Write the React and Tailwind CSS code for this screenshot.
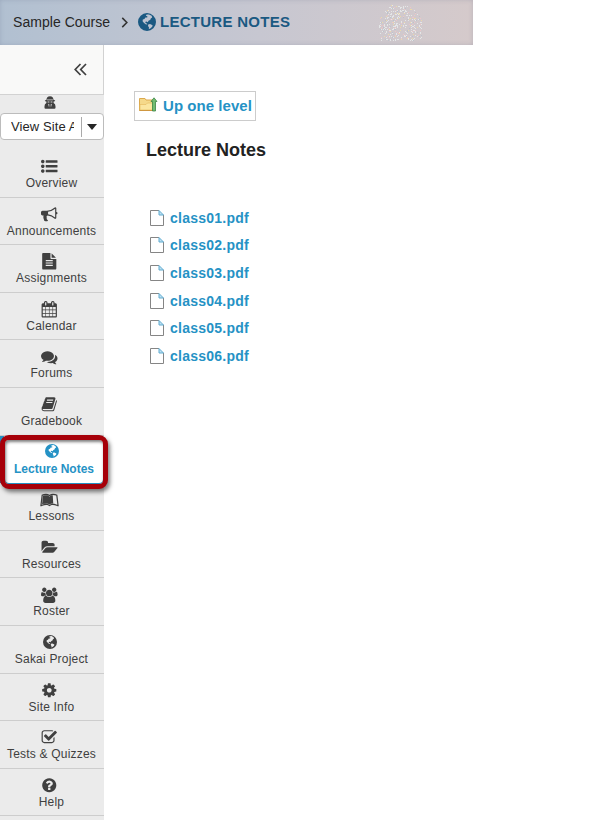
import { FaLeanpub } from "react-icons/fa";

const paths = {
  list: [1792, "M384 1408q0 80-56 136t-136 56-136-56-56-136 56-136 136-56 136 56 56 136zm0-512q0 80-56 136t-136 56-136-56-56-136 56-136 136-56 136 56 56 136zm1408 416v192q0 13-9.5 22.5t-22.5 9.5h-1216q-13 0-22.5-9.5t-9.5-22.5v-192q0-13 9.5-22.5t22.5-9.5h1216q13 0 22.5 9.5t9.5 22.5zm-1408-928q0 80-56 136t-136 56-136-56-56-136 56-136 136-56 136 56 56 136zm1408 416v192q0 13-9.5 22.5t-22.5 9.5h-1216q-13 0-22.5-9.5t-9.5-22.5v-192q0-13 9.5-22.5t22.5-9.5h1216q13 0 22.5 9.5t9.5 22.5zm0-512v192q0 13-9.5 22.5t-22.5 9.5h-1216q-13 0-22.5-9.5t-9.5-22.5v-192q0-13 9.5-22.5t22.5-9.5h1216q13 0 22.5 9.5t9.5 22.5z"],
  bullhorn: [1792, "M1664 640q53 0 90.5 37.5t37.5 90.5-37.5 90.5-90.5 37.5v384q0 52-38 90t-90 38q-417-347-812-380-58 19-91 66t-31 100.5 40 92.5q-20 33-23 65.5t6 58 33.5 55 48 50 61.5 50.5q-29 58-111.5 83t-168.5 11.5-132-55.5q-7-23-29.5-87.5t-32-94.5-23-89-15-101 3.5-98.5 22-110.5h-122q-66 0-113-47t-47-113v-192q0-66 47-113t113-47h480q435 0 896-384 52 0 90 38t38 90v384zm-128 604v-954q-394 302-768 343v270q377 42 768 341z"],
  file: [1792, "M1596 476q14 14 28 36h-472v-472q22 14 36 28zm-476 164h544v1056q0 40-28 68t-68 28h-1344q-40 0-68-28t-28-68v-1600q0-40 28-68t68-28h800v544q0 40 28 68t68 28zm160 736v-64q0-14-9-23t-23-9h-704q-14 0-23 9t-9 23v64q0 14 9 23t23 9h704q14 0 23-9t9-23zm0-256v-64q0-14-9-23t-23-9h-704q-14 0-23 9t-9 23v64q0 14 9 23t23 9h704q14 0 23-9t9-23zm0-256v-64q0-14-9-23t-23-9h-704q-14 0-23 9t-9 23v64q0 14 9 23t23 9h704q14 0 23-9t9-23z"],
  calendar: [1792, "M192 1664h288v-288h-288v288zm352 0h320v-288h-320v288zm-352-352h288v-320h-288v320zm352 0h320v-320h-320v320zm-352-384h288v-288h-288v288zm736 736h320v-288h-320v288zm-384-736h320v-288h-320v288zm768 736h288v-288h-288v288zm-384-352h320v-320h-320v320zm-352-864v-288q0-13-9.5-22.5t-22.5-9.5h-64q-13 0-22.5 9.5t-9.5 22.5v288q0 13 9.5 22.5t22.5 9.5h64q13 0 22.5-9.5t9.5-22.5zm736 864h288v-320h-288v320zm-384-384h320v-288h-320v288zm384 0h288v-288h-288v288zm32-480v-288q0-13-9.5-22.5t-22.5-9.5h-64q-13 0-22.5 9.5t-9.5 22.5v288q0 13 9.5 22.5t22.5 9.5h64q13 0 22.5-9.5t9.5-22.5zm384-64v1280q0 52-38 90t-90 38h-1408q-52 0-90-38t-38-90v-1280q0-52 38-90t90-38h128v-96q0-66 47-113t113-47h64q66 0 113 47t47 113v96h384v-96q0-66 47-113t113-47h64q66 0 113 47t47 113v96h128q52 0 90 38t38 90z"],
  comments: [1792, "M1408 768q0 139-94 257t-256.5 186.5-353.5 68.5q-86 0-176-16-124 88-278 128-36 9-86 16h-3q-11 0-20.5-8t-11.5-21q-1-3-1-6.5t.5-6.5 2-6l2.5-5 3.5-5.5 4-5 4.5-5 4-4.5q5-6 23-25t26-29.5 22.5-29 25-38.5 20.5-44q-124-72-195-177t-71-224q0-139 94-257t256.5-186.5 353.5-68.5 353.5 68.5 256.5 186.5 94 257zm384 256q0 120-71 224.5t-195 176.5q10 24 20.5 44t25 38.5 22.5 29 26 29.5 23 25q1 1 4 4.5t4.5 5 4 5 3.5 5.5l2.5 5 2 6 .5 6.5-1 6.5q-3 14-13 22t-22 7q-50-7-86-16-154-40-278-128-90 16-176 16-271 0-472-132 58 4 88 4 161 0 309-45t264-129q125-92 192-212t67-254q0-77-23-152 129 71 204 178t75 230z"],
  book: [1792, "M1703 478q40 57 18 129l-275 906q-19 64-76.5 107.5t-122.5 43.5h-923q-77 0-148.5-53.5t-99.5-131.5q-24-67-2-127 0-4 3-27t4-37q1-8-3-21.5t-3-19.5q2-11 8-21t16.5-23.5 16.5-23.5q23-38 45-91.5t30-91.5q3-10 .5-30t-.5-28q3-11 17-28t17-23q21-36 42-92t25-90q1-9-2.5-32t.5-28q4-13 22-30.5t22-22.5q19-26 42.5-84.5t27.5-96.5q1-8-3-25.5t-2-26.5q2-8 9-18t18-23 17-21q8-12 16.5-30.5t15-35 16-36 19.5-32 26.5-23.5 36-11.5 47.5 5.5l-1 3q38-9 51-9h761q74 0 114 56t18 130l-274 906q-36 119-71.5 153.5t-128.5 34.5h-869q-27 0-38 15-11 16-1 43 24 70 144 70h923q29 0 56-15.5t35-41.5l300-987q7-22 5-57 38 15 59 43zm-1064 2q-4 13 2 22.5t20 9.5h608q13 0 25.5-9.5t16.5-22.5l21-64q4-13-2-22.5t-20-9.5h-608q-13 0-25.5 9.5t-16.5 22.5zm-83 256q-4 13 2 22.5t20 9.5h608q13 0 25.5-9.5t16.5-22.5l21-64q4-13-2-22.5t-20-9.5h-608q-13 0-25.5 9.5t-16.5 22.5z"],
  folder: [1943, "M1943 952q0 31-31 66l-336 396q-43 51-120.5 86.5t-143.5 35.5h-1088q-34 0-60.5-13t-26.5-43q0-31 31-66l336-396q43-51 120.5-86.5t143.5-35.5h1088q34 0 60.5 13t26.5 43zm-343-344v160h-832q-94 0-197 47.5t-164 119.5l-337 396-5 6q0-4-.5-12.5t-.5-12.5v-960q0-92 66-158t158-66h320q92 0 158 66t66 158v32h544q92 0 158 66t66 158z"],
  users: [1920, "M593 896q-162 5-265 128h-134q-82 0-138-40.5t-56-118.5q0-353 124-353 6 0 43.5 21t97.5 42.5 119 21.5q67 0 133-23-5 37-5 66 0 159 93 287zm1071 637q0 120-73 189.5t-194 69.5h-874q-121 0-194-69.5t-73-189.5q0-53 3.5-103.5t14-109 26.5-108.5 43-97.5 62-81 85.5-53.5 111.5-20q10 0 43 21.5t73 48 107 48 135 21.5 135-21.5 107-48 73-48 43-21.5q61 0 111.5 20t85.5 53.5 62 81 43 97.5 26.5 108.5 14 109 3.5 103.5zm-1024-1277q0 106-75 181t-181 75-181-75-75-181 75-181 181-75 181 75 75 181zm704 384q0 159-112.5 271.5t-271.5 112.5-271.5-112.5-112.5-271.5 112.5-271.5 271.5-112.5 271.5 112.5 112.5 271.5zm576 225q0 78-56 118.5t-138 40.5h-134q-103-123-265-128 93-128 93-287 0-29-5-66 66 23 133 23 59 0 119-21.5t97.5-42.5 43.5-21q124 0 124 353zm-128-609q0 106-75 181t-181 75-181-75-75-181 75-181 181-75 181 75 75 181z"],
  cog: [1792, "M1152 896q0-106-75-181t-181-75-181 75-75 181 75 181 181 75 181-75 75-181zm512-109v222q0 12-8 23t-20 13l-185 28q-19 54-39 91 35 50 107 138 10 12 10 25t-9 23q-27 37-99 108t-94 71q-12 0-26-9l-138-108q-44 23-91 38-16 136-29 186-7 28-36 28h-222q-14 0-24.5-8.5t-11.5-21.5l-28-184q-49-16-90-37l-141 107q-10 9-25 9-14 0-25-11-126-114-165-168-7-10-7-23 0-12 8-23 15-21 51-66.5t54-70.5q-27-50-41-99l-183-27q-13-2-21-12.5t-8-23.5v-222q0-12 8-23t19-13l186-28q14-46 39-92-40-57-107-138-10-12-10-24 0-10 9-23 26-36 98.5-107.5t94.5-71.5q13 0 26 10l138 107q44-23 91-38 16-136 29-186 7-28 36-28h222q14 0 24.5 8.5t11.5 21.5l28 184q49 16 90 37l142-107q9-9 24-9 13 0 25 10 129 119 165 170 7 8 7 22 0 12-8 23-15 21-51 66.5t-54 70.5q26 50 41 98l183 28q13 2 21 12.5t8 23.5z"],
  check: [1792, "M1472 930v318q0 119-84.5 203.5t-203.5 84.5h-832q-119 0-203.5-84.5t-84.5-203.5v-832q0-119 84.5-203.5t203.5-84.5h832q63 0 117 25 15 7 18 23 3 17-9 29l-49 49q-10 10-23 10-3 0-9-2-23-6-45-6h-832q-66 0-113 47t-47 113v832q0 66 47 113t113 47h832q66 0 113-47t47-113v-254q0-13 9-22l64-64q10-10 23-10 6 0 12 3 20 8 20 29zm231-489l-814 814q-24 24-57 24t-57-24l-430-430q-24-24-24-57t24-57l110-110q24-24 57-24t57 24l263 263 647-647q24-24 57-24t57 24l110 110q24 24 24 57t-24 57z"],
  question: [1792, "M1024 1376v-192q0-14-9-23t-23-9h-192q-14 0-23 9t-9 23v192q0 14 9 23t23 9h192q14 0 23-9t9-23zm256-672q0-88-55.5-163t-138.5-116-170-41q-243 0-371 213-15 24 8 42l132 100q7 6 19 6 16 0 25-12 53-68 86-92 34-24 86-24 48 0 85.5 26t37.5 59q0 38-20 61t-68 45q-63 28-115.5 86.5t-52.5 125.5v36q0 14 9 23t23 9h192q14 0 23-9t9-23q0-19 21.5-49.5t54.5-49.5q32-18 49-28.5t46-35 44.5-48 28-60.5 12.5-81zm384 192q0 209-103 385.5t-279.5 279.5-385.5 103-385.5-103-279.5-279.5-103-385.5 103-385.5 279.5-279.5 385.5-103 385.5 103 279.5 279.5 103 385.5z"],
};

function Glyph({ name }) {
  const [w, d] = paths[name];
  return (
    <svg viewBox={`0 0 ${w} 1792`} className="h-[16.5px] w-[16.5px]" fill="currentColor">
      <path d={d} />
    </svg>
  );
}

function Globe({ className }) {
  return (
    <svg viewBox="0 0 18 18" className={className} fill="currentColor">
      <path
        fillRule="evenodd"
        d="M9 0a9 9 0 1 0 0 18A9 9 0 0 0 9 0Z M8.6 1.6 11 1.4 13.6 2.8 14.2 4.4 12.8 5.4 12.2 7 10.8 7.6 9.6 9.2 8.4 8.6 7.2 9 7.8 10.2 9 10.4 9.2 11.4 7.6 11.3 5.8 9.8 4.6 8.2 4.8 6.6 6.4 6 7.4 4.6 9.2 4.4 9.4 3.2 7.8 2.8Z M10.2 11.4 12 11 14.6 12.2 14.2 13.8 12.6 15.2 10.8 16.2 11 14.4 10 13Z"
      />
    </svg>
  );
}

function Agent() {
  return (
    <svg viewBox="0 0 12 13" className="h-[13px] w-[12px]" fill="currentColor">
      <path d="M2.4 4C2.6 1.6 3.6.2 6 .2S9.400 1.600 9.600 4q1.600.2 1.600.7t-1.600.7v1.500q1.900.6 1.900 3.400v1.400q0 1-1 1h-9q-1 0-1-1v-1.400q0-2.800 1.900-3.400V5.400Q.8 5.200.8 4.700T2.400 4Z" />
      <path d="M3 3.500h6v.7H3zM3.600 5.600h1.800v.8H3.600zM6.600 5.600h1.800v.8H6.600zM4 7.800l1.400.8-.3 3zM8 7.800l-1.400.8.3 3z" fill="#d8d8d8" />
    </svg>
  );
}

const items = [
  ["Overview", "list"],
  ["Announcements", "bullhorn"],
  ["Assignments", "file"],
  ["Calendar", "calendar"],
  ["Forums", "comments"],
  ["Gradebook", "book"],
  ["Lecture Notes", "globe"],
  ["Lessons", "leanpub"],
  ["Resources", "folder"],
  ["Roster", "users"],
  ["Sakai Project", "globe"],
  ["Site Info", "cog"],
  ["Tests & Quizzes", "check"],
  ["Help", "question"],
];

function NavIcon({ name }) {
  if (name === "globe") return <Globe className="h-[14px] w-[14px]" />;
  if (name === "leanpub") return <FaLeanpub className="h-[18px] w-[19px]" />;
  return <Glyph name={name} />;
}

function NavItem({ label, icon }) {
  if (label === "Lecture Notes") {
    return (
      <li className="relative h-[47.6px] shrink-0 border-l-4 border-[#2592c5]">
        <div className="absolute top-[-1px] left-[-4px] flex h-[54px] w-[108px] flex-col items-center rounded-[9px] border-[5px] border-[#a60009] bg-white pt-[3px] font-bold text-[#2592c5] shadow-[2px_3px_4px_rgba(0,0,0,0.5),inset_1px_2px_3px_rgba(0,0,0,0.5),inset_0_-1px_0_#2592c5]">
          <span className="flex h-[17px] items-center pr-[5px]"><NavIcon name={icon} /></span>
          <span className="text-[12px] leading-[18px] whitespace-nowrap">{label}</span>
        </div>
      </li>
    );
  }
  return (
    <li className="flex h-[47.6px] shrink-0 flex-col items-center border-b border-[#cdcdcd] pt-2 text-[#404040]">
      <span className="flex h-[17px] items-center pr-[5px]"><NavIcon name={icon} /></span>
      <span className="pr-px text-[12px] leading-[17px] tracking-[0.2px] whitespace-nowrap">{label}</span>
    </li>
  );
}

// Speckled emblem in the banner, built on a 1px grid inside a dome outline.
const specks = [];
for (let y = 0; y < 36; y++) {
  for (let x = 0; x < 44; x++) {
    const half = y < 14 ? 10 + y * 0.85 : 22;
    const inside = Math.abs(x - 22) < half;
    const n = Math.abs(Math.sin(x * 12.9898 + y * 78.233) * 43758.5453) % 1;
    if (inside && n < 0.23) specks.push([x, y, n < 0.025 ? "#ecd9ab" : n < 0.05 ? "#edc6c7" : n < 0.08 ? "#bcc3cb" : "#e4e6e7"]);
  }
}

function Header() {
  return (
    <header className="flex h-[45px] w-[473px] items-center bg-linear-to-r from-[#b1c0d1] via-[#c7c7d1] via-55% to-[#d5cacb] pl-[13px] shadow-[inset_0_0_4px_rgba(110,120,145,0.3)]">
      <span className="w-[97px] text-[14px] tracking-[0.05px] whitespace-nowrap text-[#262626]">Sample Course</span>
      <svg viewBox="0 0 8 12" className="ml-[11px] h-[11px] w-[8px]" fill="none" stroke="#333" strokeWidth="1.7">
        <path d="m1 1 5 5-5 5" />
      </svg>
      <Globe className="mb-[2px] ml-[9px] h-[18px] w-[18px] text-[#1a5982]" />
      <h1 className="ml-1 w-[131px] text-[15px] font-bold tracking-[0.27px] whitespace-nowrap text-[#1a5982]">LECTURE NOTES</h1>
      <svg viewBox="0 0 44 36" className="ml-[87px] h-[36px] w-[44px]" shapeRendering="crispEdges">
        {specks.map(([x, y, c]) => <rect key={`${x}-${y}`} x={x} y={y} width="1" height="1" fill={c} />)}
      </svg>
    </header>
  );
}

function Sidebar() {
  return (
    <aside className="flex h-[775px] w-[104px] shrink-0 flex-col bg-[#ebebeb]">
      <div className="flex h-[50px] shrink-0 items-center justify-end border-r border-b border-[#d2d2d2] bg-[#f9f9f8] pr-[16px]">
        <svg viewBox="0 0 13 13" className="h-[13px] w-[13px]" fill="none" stroke="#404040" strokeWidth="1.7">
          <path d="M6.5 1 1.2 6.5 6.5 12M12 1 6.7 6.5 12 12" />
        </svg>
      </div>
      <div className="flex h-[18px] shrink-0 items-start justify-center pt-[1px] pr-[5px] text-[#404040]">
        <Agent />
      </div>
      <div className="flex h-[27px] shrink-0 items-center rounded-[4px] border border-[#bcbcbc] bg-white pl-[10px]">
        <span className="w-[63px] overflow-hidden text-[13px] tracking-[0.1px] whitespace-nowrap text-[#262626]">View Site A</span>
        <span className="ml-[7px] h-[20px] w-px bg-[#aaa]" />
        <span className="ml-[5px] border-x-[5.5px] border-t-[6px] border-x-transparent border-t-[#262626]" />
      </div>
      <ul className="mt-[10px] flex flex-col">
        {items.map(([label, icon]) => <NavItem key={label} label={label} icon={icon} />)}
      </ul>
    </aside>
  );
}

function UpFolder() {
  return (
    <svg viewBox="0 0 19 15" className="h-[15px] w-[19px]">
      <path d="M.5 13.5v-12h5.5l1 1.5h8v10.5z" fill="#f5d98a" stroke="#dca94e" />
      <path d="M1 7.5h6l1.5-1.5H15v7H1z" fill="#fbe6a0" stroke="#e6bd63" strokeWidth=".7" />
      <path d="M.5 13.5h14" stroke="#cf9740" />
      <path d="M15 .8 18 4.5h-1.5v9.500h-3V4.500H12z" fill="#72bd73" stroke="#3c8544" strokeWidth=".8" />
    </svg>
  );
}

function PageIcon() {
  return (
    <svg viewBox="0 0 14 16" className="h-[16px] w-[14px]">
      <path d="M.5.5H9.5L13.5 5v10.5H.5z" fill="#fff" />
      <path d="M9 .5H.5v15h13V5" fill="none" stroke="#858585" />
      <path d="M9 .5V5h4.5z" fill="#bde1f2" stroke="#60abd0" />
    </svg>
  );
}

export default function App() {
  return (
    <div className="h-[820px] w-[609px] overflow-hidden bg-white font-['Liberation_Sans',Arial,sans-serif]">
      <Header />
      <div className="flex">
        <Sidebar />
        <main className="flex flex-col items-start pt-[46px] pl-[30px]">
          <a className="flex h-[30px] w-[122px] items-center border border-[#ccc] pl-1 text-[#2592c5]">
            <span className="pb-1"><UpFolder /></span>
            <span className="ml-[5px] text-[15px] font-bold tracking-[0.05px] whitespace-nowrap">Up one level</span>
          </a>
          <h2 className="mt-[16px] ml-3 text-[18px] leading-[26px] font-bold text-[#222]">Lecture Notes</h2>
          <ul className="mt-[41px] ml-4">
            {["01", "02", "03", "04", "05", "06"].map((n) => (
              <li key={n} className="flex h-[27.6px] items-center text-[14px] font-bold text-[#2592c5]">
                <PageIcon />
                <span className="ml-[6px] pt-px tracking-[0.25px]">{`class${n}.pdf`}</span>
              </li>
            ))}
          </ul>
        </main>
      </div>
    </div>
  );
}
